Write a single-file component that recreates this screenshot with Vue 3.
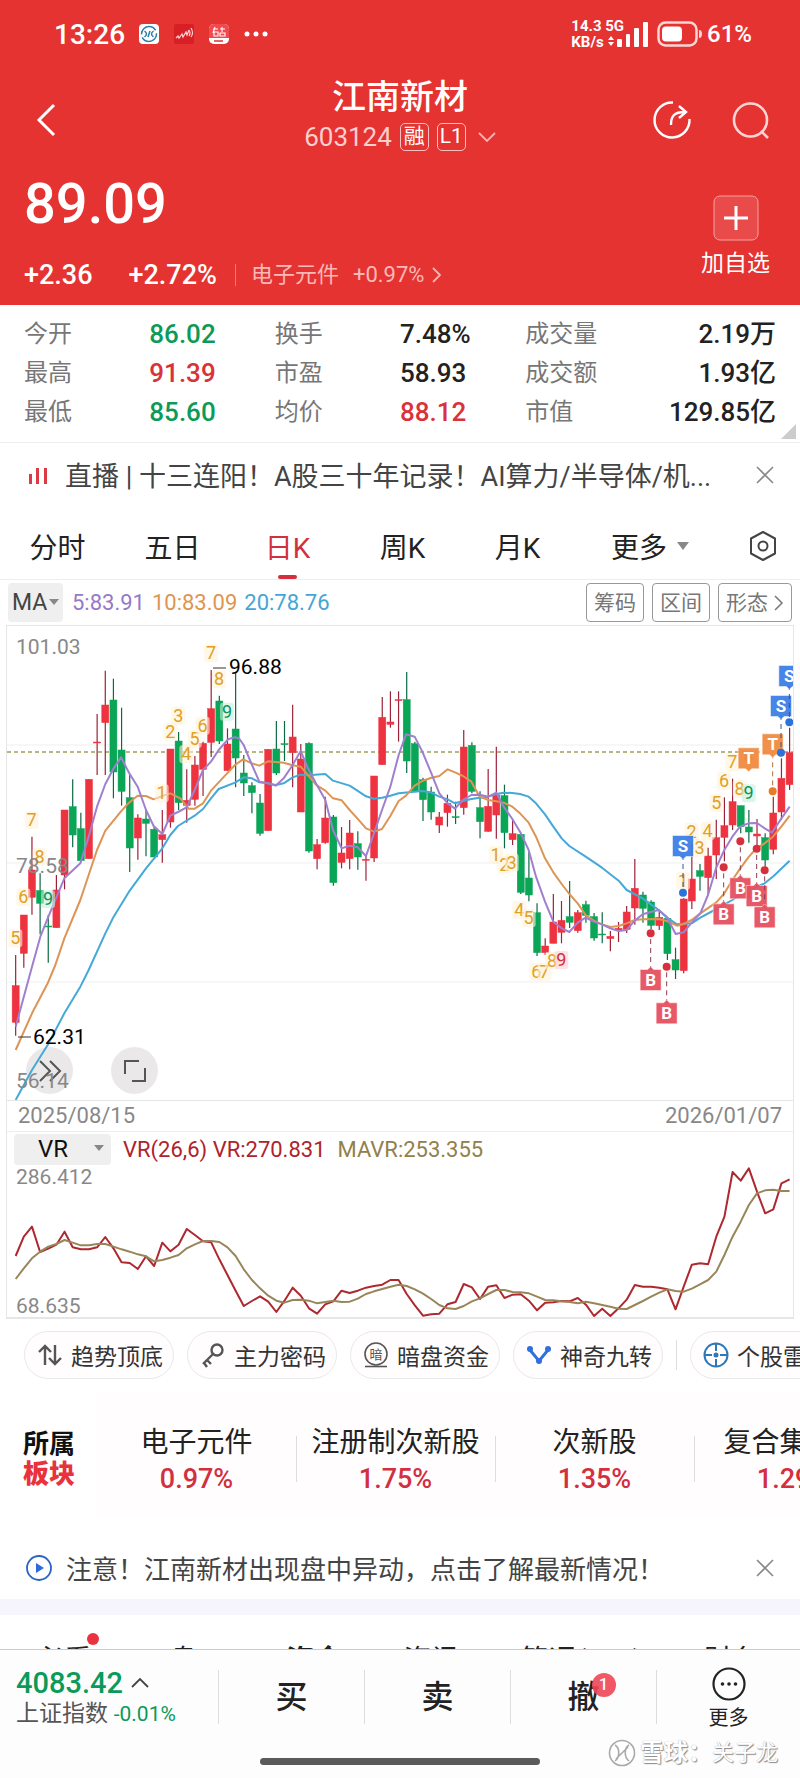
<template>
  <div class="stockPage">
    <!-- 头部 -->
    <header class="header">
      <div class="statusBar">
        <span class="clock">13:26</span>
        <svg class="appIcon" width="20" height="20" viewBox="0 0 20 20">
          <rect width="20" height="20" rx="4" fill="#fff" />
          <g fill="none" stroke="#2b7fa8" stroke-width="1.5">
            <circle cx="10" cy="10" r="7.5" stroke-dasharray="20 3" />
            <path d="M5.5 7q4 3 0 6M14.5 7q-4 3 0 6M9 13l2-6" />
          </g>
        </svg>
        <svg class="appIcon" width="20" height="20" viewBox="0 0 20 20">
          <rect width="20" height="20" rx="2" fill="#d91f26" />
          <path
            d="M2 14l2-2 1 2 3-4 1 3 3-5 1 3 2-5M15 6q2 3 0 6M17 4q3 5 0 9"
            fill="none"
            stroke="#ffd5d5"
            stroke-width="1.2"
          />
        </svg>
        <svg class="appIcon" width="20" height="20" viewBox="0 0 20 20">
          <rect width="20" height="20" rx="5" fill="#fff" />
          <path d="M0 14V5a5 5 0 0 1 5-5h10a5 5 0 0 1 5 5v9z" fill="#f04a50" />
          <path
            d="M4 5h5M6 3l-2 6M5 8h4v4H5zM11 5h5M13 3v5M11 9h5v3h-5z"
            fill="none"
            stroke="#fff"
            stroke-width="1.1"
          />
          <path d="M5 17h9" stroke="#d33" stroke-width="1.5" />
        </svg>
        <svg width="24" height="20" viewBox="0 0 24 20" fill="#fff">
          <circle cx="3" cy="10" r="2.5" />
          <circle cx="12" cy="10" r="2.5" />
          <circle cx="21" cy="10" r="2.5" />
        </svg>
        <div class="netSpeed">
          <span>14.3 5G</span>
          <span>KB/s</span>
        </div>
        <svg class="signal" width="40" height="26" viewBox="0 0 40 26" fill="#fff">
          <path d="M0 19l3-4 3 4zM0 21l3 4 3-4z" />
          <rect x="9" y="18" width="5" height="8" rx="1" />
          <rect x="18" y="13" width="4" height="13" rx="1" />
          <rect x="26" y="7" width="5" height="19" rx="1" />
          <rect x="35" y="1" width="5" height="25" rx="1" />
        </svg>
        <svg width="46" height="26" viewBox="0 0 46 26">
          <rect
            x="1.5"
            y="1.5"
            width="38"
            height="23"
            rx="7"
            fill="none"
            stroke="#fff"
            stroke-opacity=".8"
            stroke-width="2.5"
          />
          <rect x="5" y="5.5" width="20" height="15" rx="4" fill="#fff" />
          <path d="M42 9q3 0 3 4t-3 4z" fill="#fff" fill-opacity=".8" />
        </svg>
        <span class="battery">61%</span>
      </div>

      <nav class="navBar">
        <button class="iconBtn back" aria-label="返回">
          <svg width="20" height="34" viewBox="0 0 20 34">
            <path d="M18 2L3 17l15 15" fill="none" stroke="#fff" stroke-width="3" />
          </svg>
        </button>
        <div class="stockTitle">
          <h1>江南新材</h1>
          <p class="code">
            <span>603124</span>
            <span class="tag">融</span>
            <span class="tag">L1</span>
            <svg width="18" height="12" viewBox="0 0 18 12">
              <path d="M1 2l8 8 8-8" fill="none" stroke="#f7b4b3" stroke-width="1.8" />
            </svg>
          </p>
        </div>
        <div class="navRight">
          <button class="iconBtn" aria-label="分享">
            <svg width="40" height="40" viewBox="0 0 40 40" fill="none" stroke="#fff" stroke-width="2.4">
              <path d="M21 2.5A17.5 17.5 0 1 0 37.5 19" />
              <path d="M19 25c0-9 3-13 14-13M27 6l7 6-7 6" />
            </svg>
          </button>
          <button class="iconBtn" aria-label="搜索">
            <svg width="38" height="40" viewBox="0 0 38 40" fill="none" stroke="#fbd5d4" stroke-width="2.6">
              <circle cx="18.5" cy="20" r="16.5" />
              <path d="M29 31l7 7" />
            </svg>
          </button>
        </div>
      </nav>

      <div class="quote">
        <div>
          <p class="price">89.09</p>
          <p class="change">
            <span>+2.36</span>
            <span class="percent">+2.72%</span>
            <a class="industry" href="#">
              <span>电子元件</span>
              <span>+0.97%</span>
              <svg width="10" height="16" viewBox="0 0 10 16">
                <path d="M1 1l7 7-7 7" fill="none" stroke="#f7b4b3" stroke-width="1.8" />
              </svg>
            </a>
          </p>
        </div>
        <button class="addBtn">
          <svg width="46" height="46" viewBox="0 0 46 46">
            <rect x="1" y="1" width="44" height="44" rx="6" fill="#e94b4b" stroke="#f5a3a2" />
            <path d="M11 23h24M23 11v24" stroke="#fff" stroke-width="3" />
          </svg>
          <span>加自选</span>
        </button>
      </div>
    </header>

    <!-- 行情数据 -->
    <section class="stats">
      <dl v-for="item in stats" :key="item.label">
        <dt>{{ item.label }}</dt>
        <dd :class="item.type">{{ item.value }}</dd>
      </dl>
      <i class="fold"></i>
    </section>

    <!-- 直播条 -->
    <div class="notice live">
      <svg width="24" height="24" viewBox="0 0 24 24" fill="#d93a44">
        <rect x="2" y="11" width="3" height="10" />
        <rect x="9" y="5" width="3" height="16" />
        <rect x="17" y="5" width="3" height="16" />
      </svg>
      <p>直播 | 十三连阳！A股三十年记录！AI算力/半导体/机...</p>
      <button class="iconBtn" aria-label="关闭">
        <svg width="18" height="18" viewBox="0 0 18 18">
          <path d="M1 1l16 16M17 1L1 17" stroke="#888" stroke-width="1.6" />
        </svg>
      </button>
    </div>

    <!-- 周期切换 -->
    <div class="periodTabs">
      <button
        v-for="item in periods"
        :key="item"
        :class="{ active: item === period }"
        @click="period = item"
      >
        {{ item }}
      </button>
      <button>更多<i class="arrow"></i></button>
      <button aria-label="设置">
        <svg width="28" height="32" viewBox="0 0 28 32" fill="none" stroke="#444" stroke-width="2">
          <path d="M14 2l12 6.5v15L14 30 2 23.500v-15z" stroke-linejoin="round" />
          <circle cx="14" cy="16" r="4.5" />
        </svg>
      </button>
    </div>

    <!-- K线 -->
    <div class="maRow">
      <div class="selectBox maSelect">
        <select aria-label="主图指标">
          <option>MA</option>
        </select>
        <i class="arrow"></i>
      </div>
      <span class="ma5">5:83.91</span>
      <span class="ma10">10:83.09</span>
      <span class="ma20">20:78.76</span>
      <div class="maBtns">
        <button>筹码</button>
        <button>区间</button>
        <button>
          形态
          <svg width="10" height="16" viewBox="0 0 10 16">
            <path d="M1 1l7 7-7 7" fill="none" stroke="#777" stroke-width="1.5" />
          </svg>
        </button>
      </div>
    </div>

    <div class="chartBox">
      <div class="kChart">
        <button class="roundBtn expand" aria-label="展开">
          <svg width="24" height="22" viewBox="0 0 24 22">
            <path d="M2 1l10 10L2 21M12 1l10 10-10 10" fill="none" stroke="#555" stroke-width="2" />
          </svg>
        </button>
        <button class="roundBtn full" aria-label="全屏">
          <svg width="22" height="22" viewBox="0 0 22 22">
            <path d="M1 14V1h14M21 8v13H8" fill="none" stroke="#555" stroke-width="2" />
          </svg>
        </button>
        <svg class="kSvg" viewBox="0 0 786 474">
          <g stroke="#efefef">
            <line v-for="y in [119, 237, 356]" :key="y" x1="0" x2="786" :y1="y" :y2="y" />
          </g>
          <line class="nowLine" x1="0" x2="786" y1="126" y2="126" />

          <!-- 蜡烛 -->
          <g v-for="(c, i) in candles" :key="'c' + i" :class="c[4] ? 'up' : 'down'">
            <line :x1="candleX(i)" :x2="candleX(i)" :y1="toY(c[0])" :y2="toY(c[3])" />
            <rect
              :x="candleX(i) - 3.5"
              :y="toY(c[1])"
              width="7"
              :height="Math.max((c[2] - c[1]) / 3, 1)"
            />
          </g>

          <!-- 均线 -->
          <polyline class="line20" :points="toPoints(ma20)" />
          <polyline class="line10" :points="toPoints(ma10)" />
          <polyline class="line5" :points="toPoints(ma5)" />

          <!-- 九转序列 -->
          <g v-for="(t, i) in turns" :key="'t' + i" class="turn" :class="t[3]">
            <rect :x="toX(t[0]) - 7" :y="toY(t[1]) - 9" width="14" height="18" rx="3" />
            <text :x="toX(t[0])" :y="toY(t[1]) + 6">{{ t[2] }}</text>
          </g>

          <!-- 买卖点 -->
          <g v-for="(m, i) in marks" :key="'m' + i" class="mark" :class="'mark' + m[2]">
            <line :x1="toX(m[0])" :x2="toX(m[0])" :y1="toY(m[1])" :y2="toY(m[3])" />
            <circle :cx="toX(m[0])" :cy="toY(m[3])" r="4" />
            <g :transform="`translate(${toX(m[0])} ${toY(m[1])})`">
              <path :d="m[2] === 'B' ? upTip : downTip" />
              <text y="6">{{ m[2] }}</text>
            </g>
          </g>

          <!-- 最高 最低 -->
          <g class="extreme">
            <path d="M206 42h13M11 411h13" />
            <text x="222" y="48">96.88</text>
            <text x="26" y="418">62.31</text>
          </g>
          <g class="scale">
            <text x="9" y="28">101.03</text>
            <text x="9" y="247">78.58</text>
            <text x="9" y="462">56.14</text>
          </g>
        </svg>
      </div>

      <div class="dateRow">
        <span>2025/08/15</span>
        <span>2026/01/07</span>
      </div>

      <!-- VR 副图 -->
      <div class="vrRow">
        <div class="selectBox vrSelect">
          <select aria-label="副图指标">
            <option>VR</option>
          </select>
          <i class="arrow"></i>
        </div>
        <span class="vr">VR(26,6) VR:270.831</span>
        <span class="mavr">MAVR:253.355</span>
      </div>
      <svg class="vrChart" viewBox="0 0 786 151">
        <polyline class="vrLine" :points="vrPoints(vr)" />
        <polyline class="mavrLine" :points="vrPoints(mavr)" />
        <g class="scale">
          <text x="9" y="18">286.412</text>
          <text x="9" y="147">68.635</text>
        </g>
      </svg>
    </div>

    <!-- 特色功能 -->
    <div class="chips">
      <button>
        <svg width="26" height="26" viewBox="0 0 26 26" fill="none" stroke="#555" stroke-width="2.4">
          <path d="M8 23V4M2 10l6-6 6 6M18 3v19M12 16l6 6 6-6" />
        </svg>
        趋势顶底
      </button>
      <button>
        <svg width="26" height="26" viewBox="0 0 26 26" fill="none" stroke="#555" stroke-width="2.4">
          <circle cx="17" cy="8" r="5.5" />
          <path d="M13 12L3 22M7 18l4 4M4 21l3 4" />
        </svg>
        主力密码
      </button>
      <button>
        <svg width="26" height="26" viewBox="0 0 26 26" fill="none" stroke="#555" stroke-width="1.6">
          <circle cx="13" cy="12" r="11" />
          <path d="M2 24.500h22" />
          <text class="darkText" x="13" y="17">暗</text>
        </svg>
        暗盘资金
      </button>
      <button>
        <svg width="26" height="26" viewBox="0 0 26 26" fill="#2f6fe0">
          <path d="M4 8l9 11 9-11" fill="none" stroke="#2f6fe0" stroke-width="3" />
          <circle cx="4" cy="7" r="3" />
          <circle cx="13" cy="19" r="3" />
          <circle cx="22" cy="7" r="3" />
        </svg>
        神奇九转
      </button>
      <i class="chipLine"></i>
      <button>
        <svg width="26" height="26" viewBox="0 0 26 26" fill="none" stroke="#2f78b8" stroke-width="2">
          <circle cx="13" cy="13" r="11.5" />
          <path d="M13 2v7M13 17v7M2 13h7M17 13h7" />
          <circle cx="13" cy="13" r="1.5" fill="#2f78b8" />
        </svg>
        个股雷达
      </button>
    </div>

    <!-- 所属板块 -->
    <div class="plates">
      <p class="plateTitle">所属<br /><b>板块</b></p>
      <div class="plateList">
        <a v-for="item in plates" :key="item.name" class="plateItem" href="#">
          <span>{{ item.name }}</span>
          <em>{{ item.value }}</em>
        </a>
      </div>
    </div>

    <!-- 异动提醒 -->
    <div class="notice warn">
      <svg width="26" height="26" viewBox="0 0 26 26">
        <circle cx="13" cy="13" r="12" fill="none" stroke="#2b63c4" stroke-width="1.8" />
        <path d="M10 8l8 5-8 5z" fill="#2b6ae0" />
      </svg>
      <p>注意！江南新材出现盘中异动，点击了解最新情况！</p>
      <button class="iconBtn" aria-label="关闭">
        <svg width="18" height="18" viewBox="0 0 18 18">
          <path d="M1 1l16 16M17 1L1 17" stroke="#888" stroke-width="1.6" />
        </svg>
      </button>
    </div>

    <!-- 资料 tab，下半截被底栏挡住 -->
    <div class="infoTabs">
      <button v-for="item in infos" :key="item" :class="{ active: item === '资金' }">
        {{ item }}<i v-if="item === '必看'" class="dot"></i>
      </button>
    </div>

    <!-- 底栏 -->
    <footer class="footer">
      <div class="footRow">
        <a class="index" href="#">
          <span class="indexNum">
            4083.42
            <svg width="18" height="12" viewBox="0 0 18 12">
              <path d="M1 10l8-8 8 8" fill="none" stroke="#444" stroke-width="1.8" />
            </svg>
          </span>
          <span class="indexName">上证指数 <em>-0.01%</em></span>
        </a>
        <button>买</button>
        <button>卖</button>
        <button><span class="cancel">撤<i class="badge">1</i></span></button>
        <button class="moreBtn">
          <svg width="34" height="34" viewBox="0 0 34 34">
            <circle cx="17" cy="17" r="15.5" fill="none" stroke="#222" stroke-width="2.2" />
            <g fill="#222">
              <circle cx="10.5" cy="17" r="1.8" />
              <circle cx="17" cy="17" r="1.8" />
              <circle cx="23.5" cy="17" r="1.8" />
            </g>
          </svg>
          <span>更多</span>
        </button>
      </div>
      <i class="homeBar"></i>
      <p class="watermark">
        <svg width="28" height="28" viewBox="0 0 28 28" fill="none" stroke="#aaa" stroke-width="1.6">
          <circle cx="14" cy="14" r="12.5" fill="#fff" />
          <path d="M7 6c5 3 5 12 0 16M21 6c-5 3-5 12 0 16M8 20L20 8" />
        </svg>
        <b>雪球：</b>关子龙
      </p>
    </footer>
  </div>
</template>

<script setup>
import { ref } from 'vue'

const period = ref('日K')
const periods = ['分时', '五日', '日K', '周K', '月K']
const infos = ['必看', '盘口', '资金', '资讯', '简况(F10)', '财务']

const stats = [
  { label: '今开', value: '86.02', type: 'green' },
  { label: '换手', value: '7.48%' },
  { label: '成交量', value: '2.19万' },
  { label: '最高', value: '91.39', type: 'red' },
  { label: '市盈', value: '58.93' },
  { label: '成交额', value: '1.93亿' },
  { label: '最低', value: '85.60', type: 'green' },
  { label: '均价', value: '88.12', type: 'red' },
  { label: '市值', value: '129.85亿' }
]

const plates = [
  { name: '电子元件', value: '0.97%' },
  { name: '注册制次新股', value: '1.75%' },
  { name: '次新股', value: '1.35%' },
  { name: '复合集流体', value: '1.29%' }
]

// 蜡烛 [上影, 实体上, 实体下, 下影, 1涨 0跌]
const candles = [
  [1005, 1097, 1207, 1247, 1], [885, 885, 1000, 1043, 1], [650, 750, 832, 884, 1],
  [760, 812, 850, 943, 0], [885, 918, 921, 1028, 0], [765, 810, 923, 923, 1],
  [570, 570, 765, 808, 1], [478, 560, 645, 682, 0], [578, 626, 722, 722, 0],
  [478, 478, 716, 716, 1], [282, 366, 369, 465, 1], [152, 255, 308, 465, 1],
  [176, 240, 456, 535, 0], [263, 390, 514, 557, 0], [465, 533, 684, 756, 0],
  [583, 594, 654, 719, 1], [570, 597, 610, 709, 0], [620, 628, 711, 712, 0],
  [570, 644, 659, 728, 1], [387, 387, 606, 623, 1], [336, 363, 548, 570, 0],
  [448, 541, 556, 608, 1], [408, 435, 538, 557, 1], [365, 370, 448, 528, 1],
  [150, 266, 367, 411, 1], [227, 243, 363, 372, 0], [325, 372, 452, 452, 1],
  [155, 327, 414, 502, 0], [405, 459, 489, 528, 0], [487, 497, 518, 580, 0],
  [522, 549, 640, 647, 0], [388, 388, 632, 632, 1], [303, 387, 459, 465, 0],
  [303, 371, 374, 423, 0], [254, 351, 398, 502, 1], [372, 417, 576, 576, 1],
  [367, 370, 693, 698, 0], [657, 674, 716, 748, 1], [530, 594, 668, 671, 1],
  [585, 591, 788, 797, 0], [621, 699, 727, 745, 1], [600, 639, 716, 748, 1],
  [634, 671, 711, 749, 0], [705, 718, 721, 782, 1], [468, 468, 714, 726, 1],
  [231, 292, 434, 434, 1], [214, 306, 313, 323, 1], [214, 239, 241, 365, 1],
  [156, 239, 423, 459, 0], [365, 371, 514, 514, 0], [473, 479, 539, 603, 0],
  [500, 516, 576, 599, 0], [576, 591, 615, 639, 1], [524, 550, 578, 620, 1],
  [545, 590, 593, 612, 0], [330, 381, 563, 584, 1], [367, 376, 514, 520, 0],
  [514, 563, 605, 655, 0], [447, 559, 634, 635, 1], [380, 525, 585, 656, 1],
  [494, 527, 638, 685, 0], [597, 641, 659, 675, 1], [638, 643, 817, 822, 0],
  [695, 774, 825, 844, 0], [850, 878, 998, 1008, 0], [955, 978, 998, 1005, 1],
  [822, 906, 970, 970, 1], [843, 901, 937, 970, 1], [783, 890, 907, 924, 0],
  [870, 878, 932, 938, 1], [842, 854, 886, 908, 0], [879, 890, 954, 962, 0],
  [877, 942, 945, 970, 0], [933, 949, 956, 994, 1], [906, 925, 930, 966, 1],
  [858, 876, 928, 939, 1], [717, 805, 864, 914, 1], [815, 825, 865, 908, 0],
  [841, 846, 916, 927, 0], [870, 892, 917, 930, 1], [895, 895, 1001, 1020, 0],
  [983, 1019, 1050, 1077, 0], [835, 837, 1052, 1060, 1], [670, 777, 843, 867, 1],
  [732, 752, 769, 812, 0], [683, 708, 773, 824, 1], [599, 653, 705, 777, 1],
  [532, 617, 652, 724, 1], [476, 545, 615, 630, 1], [557, 557, 620, 640, 0],
  [570, 621, 636, 668, 0], [597, 642, 648, 680, 1], [640, 653, 720, 740, 0],
  [530, 579, 688, 703, 1], [415, 475, 576, 600, 1], [323, 398, 494, 510, 1]
]

// 均线，x,y 成对
const ma5 = [
  46, 1220, 95, 1040, 120, 950, 142, 895, 192, 775, 240, 730, 265, 650, 290, 560, 315, 492,
  340, 445, 362, 412, 386, 458, 412, 500, 437, 570, 460, 618, 486, 642, 510, 587, 533, 576,
  559, 562, 583, 510, 608, 450, 632, 425, 655, 390, 683, 358, 704, 352, 716, 355, 730, 375,
  755, 435, 777, 485, 803, 490, 826, 497, 850, 475, 877, 435, 901, 393, 923, 445, 948, 492,
  975, 540, 998, 630, 1024, 685, 1048, 677, 1071, 681, 1097, 708, 1121, 640, 1145, 570,
  1170, 500, 1195, 405, 1217, 343, 1243, 350, 1266, 395, 1291, 455, 1317, 520, 1342, 550,
  1364, 566, 1388, 540, 1413, 525, 1438, 524, 1464, 530, 1488, 518, 1510, 560, 1536, 597,
  1559, 635, 1585, 690, 1607, 770, 1634, 845, 1659, 905, 1684, 925, 1707, 936, 1732, 908,
  1756, 893, 1780, 905, 1805, 913, 1830, 925, 1855, 933, 1879, 930, 1903, 902, 1927, 883,
  1951, 876, 1975, 870, 1999, 890, 2026, 942, 2050, 937, 2074, 908, 2100, 880, 2123, 825,
  2148, 742, 2172, 690, 2196, 650, 2219, 620, 2244, 610, 2270, 609, 2293, 625, 2315, 638,
  2340, 600, 2368, 560
]
const ma10 = [
  46, 1290, 95, 1180, 142, 1090, 165, 1035, 192, 955, 240, 840, 265, 765, 290, 690, 315, 632,
  362, 574, 386, 548, 412, 527, 437, 528, 460, 538, 486, 528, 510, 520, 540, 535, 565, 566,
  583, 566, 608, 550, 632, 512, 683, 457, 704, 435, 728, 418, 755, 430, 777, 437, 803, 424,
  850, 428, 877, 436, 901, 440, 923, 465, 948, 495, 975, 512, 998, 535, 1024, 541, 1048, 570,
  1071, 595, 1097, 625, 1121, 635, 1145, 627, 1170, 588, 1195, 543, 1217, 527, 1243, 497,
  1266, 483, 1291, 474, 1317, 468, 1342, 448, 1364, 457, 1388, 468, 1413, 485, 1438, 530,
  1464, 540, 1488, 544, 1510, 548, 1536, 560, 1559, 580, 1585, 608, 1607, 650, 1634, 715,
  1659, 757, 1684, 792, 1707, 822, 1732, 850, 1756, 885, 1780, 902, 1805, 913, 1830, 921,
  1855, 918, 1879, 910, 1903, 900, 1927, 898, 1975, 897, 2000, 903, 2030, 917, 2050, 912,
  2074, 900, 2100, 880, 2148, 847, 2172, 820, 2196, 780, 2220, 745, 2244, 712, 2268, 685,
  2293, 670, 2318, 650, 2343, 620, 2368, 587
]
const ma20 = [
  46, 1440, 95, 1350, 142, 1275, 192, 1180, 240, 1100, 265, 1050, 315, 940, 340, 890,
  386, 815, 437, 745, 486, 685, 510, 645, 533, 618, 583, 587, 608, 567, 632, 535, 655, 507,
  704, 488, 730, 472, 755, 475, 777, 487, 803, 490, 826, 495, 850, 490, 877, 472, 901, 464,
  923, 466, 975, 462, 998, 482, 1048, 497, 1071, 512, 1097, 529, 1121, 536, 1145, 533,
  1170, 527, 1195, 520, 1266, 513, 1291, 517, 1317, 530, 1342, 538, 1364, 550, 1388, 543,
  1413, 537, 1438, 533, 1464, 530, 1488, 522, 1510, 518, 1536, 519, 1559, 522, 1585, 530,
  1607, 550, 1634, 583, 1659, 620, 1684, 655, 1707, 678, 1756, 710, 1805, 743, 1855, 782,
  1879, 810, 1927, 835, 1975, 870, 2000, 893, 2030, 913, 2074, 910, 2100, 893, 2148, 867,
  2196, 840, 2244, 812, 2293, 790, 2320, 768, 2368, 722
]

// 九转 [x, y, 数字, 九的颜色]
const turns = [
  [45, 955, 5], [69, 832, 6], [94, 600, 7], [118, 710, 8], [143, 838, 9, 'nineGreen'],
  [484, 520, 1], [510, 335, 2], [534, 287, 3], [558, 403, 4], [583, 357, 5],
  [607, 317, 6], [632, 100, 7], [656, 178, 8], [680, 275, 9, 'nineGreen'],
  [1486, 705, 1], [1512, 735, 2], [1534, 728, 3], [1557, 870, 4], [1585, 895, 5],
  [1608, 1055, 6], [1632, 1055, 7], [1655, 1022, 8], [1683, 1020, 9, 'nineRed'],
  [2048, 782, 1], [2074, 635, 2], [2098, 683, 3], [2122, 633, 4], [2148, 548, 5],
  [2171, 483, 6], [2196, 427, 7], [2218, 507, 8], [2245, 520, 9, 'nineGreen']
]

// 买卖点 [x, y, 类型, 圆点y]
const marks = [
  [1951, 1080, 'B', 940], [1999, 1180, 'B', 1040], [2170, 883, 'B', 742],
  [2220, 805, 'B', 664], [2269, 828, 'B', 686], [2293, 892, 'B', 751],
  [2048, 678, 'S', 818], [2245, 415, 'T', 415], [2317, 373, 'T', 514],
  [2342, 258, 'S', 398], [2367, 168, 'S', 307]
]
const upTip = 'M-10.5 -10.5h7.5l3-3 3 3h7.5v21h-21z'
const downTip = 'M-10.5 -10.5h21v21h-7.5l-3 3-3-3h-7.5z'

const vr = [
  498, 440, 410, 486, 476, 464, 425, 472, 478, 478, 472, 441, 475, 517, 519, 537, 499, 528,
  458, 484, 464, 417, 435, 454, 457, 508, 555, 602, 648, 633, 619, 635, 666, 632, 593, 617,
  655, 671, 643, 634, 602, 609, 602, 593, 588, 584, 570, 570, 612, 646, 677, 673, 671, 643,
  636, 582, 592, 627, 590, 586, 624, 614, 613, 632, 661, 638, 637, 633, 634, 624, 644, 678,
  656, 678, 655, 629, 585, 590, 590, 593, 598, 658, 590, 524, 520, 523, 440, 380, 246, 272,
  235, 305, 370, 358, 280, 268
]
const mavr = [
  567, 535, 505, 485, 470, 462, 450, 458, 466, 466, 462, 462, 470, 478, 485, 493, 499, 514,
  510, 503, 495, 475, 463, 453, 453, 456, 472, 498, 538, 570, 595, 617, 632, 638, 630, 629,
  632, 640, 636, 632, 636, 635, 626, 612, 604, 597, 590, 584, 588, 598, 611, 627, 645, 655,
  657, 648, 634, 625, 612, 600, 600, 606, 607, 610, 620, 630, 631, 634, 636, 640, 635, 640,
  645, 650, 656, 657, 645, 633, 620, 608, 598, 603, 605, 596, 583, 570, 545, 495, 440, 395,
  345, 310, 301, 299, 303, 303
]

// 数据坐标 转 画布坐标
function toX(x) {
  return (x - 20) / 3
}
function toY(y) {
  return (y - 18) / 3
}
function candleX(i) {
  return toX(46 + i * 24.44)
}
function toPoints(list) {
  let res = []
  for (let i = 0; i < list.length; i += 2) {
    res.push(`${toX(list[i])},${toY(list[i + 1])}`)
  }
  return res.join(' ')
}
function vrPoints(list) {
  return list.map((v, i) => `${candleX(i)},${(v - 228) / 3}`).join(' ')
}
</script>

<style>
body {
  margin: 0;
  background-color: #fff;
}
</style>

<style scoped>
.stockPage {
  overflow: hidden;
  font-family: Roboto, 'Noto Sans CJK SC', sans-serif;
  color: #222;
  background-color: #fff;
}

h1,
p,
dl,
dd {
  margin: 0;
  font-weight: normal;
}

button,
select {
  padding: 0;
  border: none;
  background: none;
  font-family: inherit;
  color: inherit;
}

a {
  color: inherit;
  text-decoration: none;
}

em,
i {
  font-style: normal;
}

svg {
  flex: none;
}

.iconBtn {
  display: flex;
  align-items: center;
  justify-content: center;
}

.red {
  color: #d93239;
}

.green {
  color: #0b9a58;
}

.arrow {
  width: 0;
  border: 6px solid transparent;
  border-top: 8px solid #888;
  border-bottom: none;
}

/* 头部 */
.header {
  color: #fff;
  background-color: #e53331;
}

.statusBar {
  display: flex;
  align-items: center;
  height: 68px;
  padding: 0 48px 0 54px;
}

.clock {
  margin-right: 14px;
  font-size: 28px;
  font-weight: 500;
}

.appIcon {
  margin-right: 15px;
}

.netSpeed {
  display: flex;
  flex-direction: column;
  margin-left: auto;
  font-size: 15px;
  font-weight: 700;
  line-height: 16px;
}

.signal {
  margin: 0 9px 0 -16px;
}

.battery {
  margin-left: 4px;
  font-size: 24px;
  font-weight: 500;
}

.navBar {
  display: flex;
  justify-content: space-between;
  align-items: flex-end;
  padding: 9px 30px 0 36px;
}

.navBar .iconBtn {
  height: 64px;
}

.navBar .back {
  width: 114px;
  justify-content: flex-start;
}

.stockTitle {
  display: flex;
  flex-direction: column;
  align-items: center;
  gap: 5px;
}

.stockTitle h1 {
  font-size: 34px;
  font-weight: 500;
  line-height: 40px;
}

.code {
  display: flex;
  align-items: center;
  gap: 8px;
  height: 30px;
  font-size: 26px;
  color: #fbcfce;
}

.tag {
  width: 27px;
  height: 26px;
  border: 1px solid #f9c0bf;
  border-radius: 5px;
  font-size: 21px;
  line-height: 25px;
  text-align: center;
  color: #fff;
}

.code svg {
  margin-left: 4px;
}

.navRight {
  display: flex;
  justify-content: flex-end;
  gap: 40px;
  width: 120px;
}

.quote {
  display: flex;
  justify-content: space-between;
  align-items: flex-end;
  padding: 22px 30px 14px 24px;
}

.price {
  margin-bottom: 25px;
  font-size: 56px;
  font-weight: 500;
  line-height: 60px;
}

.change {
  display: flex;
  align-items: center;
  font-size: 27px;
  font-weight: 500;
  line-height: 32px;
}

.percent {
  margin: 0 18px 0 36px;
}

.industry {
  display: flex;
  align-items: center;
  gap: 14px;
  padding-left: 15px;
  border-left: 1px solid #ee7b79;
  font-size: 22px;
  font-weight: 400;
  line-height: 22px;
  color: #f9b9b8;
}

.industry svg {
  margin-left: -6px;
}

.addBtn {
  display: flex;
  flex-direction: column;
  align-items: center;
  gap: 8px;
  padding-bottom: 12px;
  font-size: 23px;
  line-height: 30px;
}

/* 行情数据 */
.stats {
  position: relative;
  display: grid;
  grid-template-columns: repeat(3, 1fr);
  padding: 10px 24px;
  border-bottom: 1px solid #eee;
}

.stats dl {
  display: flex;
  line-height: 39px;
}

.stats dt {
  width: 50%;
  font-size: 24px;
  color: #777;
}

.stats dd {
  font-size: 26px;
  font-weight: 500;
}

.stats dl:nth-of-type(3n) dd {
  flex: 1;
  text-align: right;
}

.fold {
  position: absolute;
  right: 4px;
  bottom: 3px;
  border-left: 15px solid transparent;
  border-bottom: 15px solid #ccc;
}

/* 提示条 */
.notice {
  display: flex;
  align-items: center;
  gap: 14px;
  height: 63px;
  padding: 0 26px;
  font-size: 26px;
  color: #444;
}

.notice p {
  flex: 1;
  overflow: hidden;
  white-space: nowrap;
}

.live {
  padding-left: 27px;
  font-size: 27px;
}

.warn {
  margin-top: 18px;
}

/* 周期切换 */
.periodTabs {
  display: grid;
  grid-template-columns: repeat(5, 23fr) 30fr 15fr;
  height: 73px;
  border-bottom: 1px solid #eee;
}

.periodTabs button {
  position: relative;
  display: flex;
  align-items: center;
  justify-content: center;
  gap: 10px;
  padding-top: 6px;
  font-size: 28px;
}

.periodTabs .active {
  color: #d2303f;
}

.periodTabs .active::after {
  content: '';
  position: absolute;
  bottom: 0;
  width: 19px;
  height: 4px;
  border-radius: 2px;
  background-color: #d2303f;
}

/* 主图指标 */
.maRow {
  display: flex;
  align-items: center;
  gap: 7px;
  height: 45px;
  padding: 0 8px;
  font-size: 22px;
}

.selectBox {
  position: relative;
  border-radius: 4px;
  background-color: #efefef;
}

.selectBox select {
  width: 100%;
  height: 100%;
  appearance: none;
  font-size: 24px;
}

.selectBox .arrow {
  position: absolute;
  top: 50%;
  right: 4px;
  margin-top: -4px;
  border-width: 6px 5px 0;
  pointer-events: none;
}

.maSelect {
  width: 55px;
  height: 39px;
  margin-right: 2px;
}

.maSelect select {
  padding-left: 4px;
  font-size: 23px;
  color: #444;
}

.ma5 {
  color: #9579cb;
}

.ma10 {
  color: #e0954f;
}

.ma20 {
  color: #45a5d6;
}

.maBtns {
  display: flex;
  gap: 8px;
  margin-left: auto;
}

.maBtns button {
  display: flex;
  align-items: center;
  gap: 6px;
  height: 39px;
  padding: 0 7px;
  border: 1px solid #999;
  border-radius: 4px;
  font-size: 21px;
  line-height: 28px;
  color: #777;
}

/* 图表 */
.chartBox {
  margin: 0 6px;
  border: 1px solid #e6e6e6;
  border-width: 1px 1px 2px;
}

.kChart {
  position: relative;
  border-bottom: 1px solid #e6e6e6;
}

.kSvg {
  position: relative;
  display: block;
  width: 100%;
  pointer-events: none;
}

.vrChart {
  display: block;
  width: 100%;
}

.nowLine {
  stroke: #a09f5c;
  stroke-width: 1.5;
  stroke-dasharray: 4 3;
}

.up {
  fill: #ee3340;
  stroke: #9c2239;
  stroke-width: 1.2;
}

.down {
  fill: #0aa557;
  stroke: #0a6a44;
  stroke-width: 1.2;
}

.up rect {
  stroke: #ee3340;
  stroke-width: 0.5;
}

.down rect {
  stroke: #0aa557;
  stroke-width: 0.5;
}

polyline {
  fill: none;
  stroke-width: 2;
  stroke-linejoin: round;
}

.line5 {
  stroke: #a07fcf;
}

.line10 {
  stroke: #dd9455;
}

.line20 {
  stroke: #45a9d8;
}

.turn {
  font-size: 18px;
  text-anchor: middle;
  fill: #dfa024;
}

.turn rect {
  fill: #fff2d8;
  fill-opacity: 0.6;
}

.nineGreen {
  fill: #0c9455;
}

.nineGreen rect {
  fill: #c4f0dc;
}

.nineRed {
  fill: #d32f3c;
}

.nineRed rect {
  fill: #fbd0d4;
}

.mark {
  font-size: 17px;
  font-weight: 700;
  text-anchor: middle;
}

.mark line {
  stroke-dasharray: 5 4;
}

.mark text {
  fill: #fff;
}

.mark path {
  fill-opacity: 0.95;
  stroke: #fff;
  stroke-width: 0.5;
}

.markB {
  fill: #e7505f;
}

.markB line {
  stroke: #8c3b50;
}

.markB circle {
  fill: #d7303c;
}

.markS {
  fill: #3d7ee6;
}

.markS line {
  stroke: #35568c;
}

.markS circle {
  fill: #2a72dc;
}

.markT {
  fill: #f08a40;
}

.markT line {
  stroke: #b4703c;
}

.markT circle {
  fill: #e67c28;
}

.extreme {
  font-size: 21px;
  fill: #000;
}

.extreme path {
  stroke: #333;
}

.scale {
  font-size: 21px;
  fill: #888;
}

.roundBtn {
  position: absolute;
  bottom: 6px;
  display: flex;
  align-items: center;
  justify-content: center;
  width: 47px;
  height: 47px;
  border-radius: 50%;
  background-color: #ebe8ea;
}

.expand {
  left: 19px;
}

.full {
  left: 104px;
}

.dateRow {
  display: flex;
  justify-content: space-between;
  padding: 0 11px;
  border-bottom: 1px solid #eee;
  font-size: 22px;
  line-height: 30px;
  color: #888;
}

.vrRow {
  display: flex;
  align-items: center;
  gap: 12px;
  height: 34px;
  padding-left: 7px;
  font-size: 22px;
}

.vrSelect {
  width: 97px;
  height: 31px;
}

.vrSelect select {
  padding-left: 24px;
  color: #111;
}

.vrSelect .arrow {
  right: 7px;
}

.vr {
  color: #ae232c;
}

.mavr {
  color: #92804c;
}

.vrLine {
  stroke: #ae2830;
}

.mavrLine {
  stroke: #98865a;
}

/* 特色功能 */
.chips {
  display: flex;
  align-items: center;
  gap: 13px;
  padding: 12px 0 14px 24px;
}

.chips button {
  flex: none;
  display: flex;
  align-items: center;
  gap: 8px;
  height: 48px;
  padding: 0 10px 0 12px;
  border: 1px solid #ebe8ea;
  border-radius: 24px;
  font-size: 23px;
  color: #333;
  background-color: #fffdfe;
}

.chipLine {
  flex: none;
  width: 1px;
  height: 30px;
  background-color: #ddd;
}

.darkText {
  font-size: 13px;
  text-anchor: middle;
  fill: #555;
  stroke: none;
}

/* 所属板块 */
.plates {
  display: flex;
  align-items: center;
  height: 125px;
}

.plateTitle {
  flex: none;
  width: 74px;
  padding: 6px 0 0 23px;
  font-size: 26px;
  font-weight: 700;
  line-height: 30px;
  color: #111;
}

.plateTitle b {
  color: #e8323c;
}

.plateList {
  flex: 1;
  display: flex;
  align-items: center;
  height: 100%;
  overflow: hidden;
  background-color: #fffdfe;
}

.plateItem {
  flex: none;
  position: relative;
  display: flex;
  flex-direction: column;
  align-items: center;
  width: 199px;
  padding-top: 10px;
  font-size: 28px;
  line-height: 37px;
}

.plateItem + .plateItem::before {
  content: '';
  position: absolute;
  left: 0;
  top: 22px;
  width: 1px;
  height: 46px;
  background-color: #ddd;
}

.plateItem em {
  font-size: 27px;
  font-weight: 500;
  color: #d22f3f;
}

/* 资料 tab */
.infoTabs {
  display: flex;
  justify-content: space-between;
  height: 34px;
  padding: 0 40px 0 36px;
  border-top: 16px solid #f6f5fd;
  overflow: hidden;
}

.infoTabs button {
  position: relative;
  height: 86px;
  font-size: 28px;
}

.infoTabs button:first-child {
  margin-right: 16px;
}

.infoTabs .active {
  font-weight: 700;
}

.dot {
  position: absolute;
  top: 18px;
  right: -7px;
  width: 12px;
  height: 12px;
  border-radius: 50%;
  background-color: #ea3340;
}

/* 底栏 */
.footer {
  position: relative;
  padding-bottom: 34px;
  border-top: 1px solid #ccc;
  background-color: #fefdfe;
}

.footRow {
  display: grid;
  grid-template-columns: 218fr 146fr 146fr 146fr 144fr;
  align-items: center;
  height: 94px;
}

.footRow button {
  height: 54px;
  border-left: 1px solid #ddd;
  font-size: 32px;
  font-weight: 500;
  line-height: 46px;
}

.index {
  display: flex;
  flex-direction: column;
  padding-left: 16px;
}

.indexNum {
  display: flex;
  align-items: center;
  gap: 8px;
  font-size: 29px;
  font-weight: 500;
  line-height: 33px;
  color: #0b9a58;
}

.indexName {
  font-size: 23px;
  line-height: 27px;
  color: #555;
}

.indexName em {
  font-size: 21px;
  color: #0b9a58;
}

.cancel {
  position: relative;
}

.badge {
  position: absolute;
  top: -5px;
  right: -16px;
  width: 24px;
  height: 24px;
  border-radius: 50%;
  font-size: 16px;
  line-height: 24px;
  text-align: center;
  color: #fff;
  background-color: rgba(240, 70, 84, 0.9);
}

.footRow .moreBtn {
  display: flex;
  flex-direction: column;
  align-items: center;
  justify-content: center;
  gap: 4px;
  padding-top: 4px;
  font-size: 20px;
  font-weight: 400;
  line-height: 26px;
}

.homeBar {
  position: absolute;
  left: 50%;
  bottom: 13px;
  width: 280px;
  height: 7px;
  margin-left: -140px;
  border-radius: 4px;
  background-color: #5a5a5a;
}

.watermark {
  position: absolute;
  right: 22px;
  bottom: 10px;
  display: flex;
  align-items: center;
  font-size: 22px;
  line-height: 30px;
  color: #fff;
  text-shadow: 1px 1px 1px #888, 0 0 1px #999;
}

.watermark svg {
  margin-right: 4px;
}

.watermark b {
  font-size: 24px;
}
</style>
